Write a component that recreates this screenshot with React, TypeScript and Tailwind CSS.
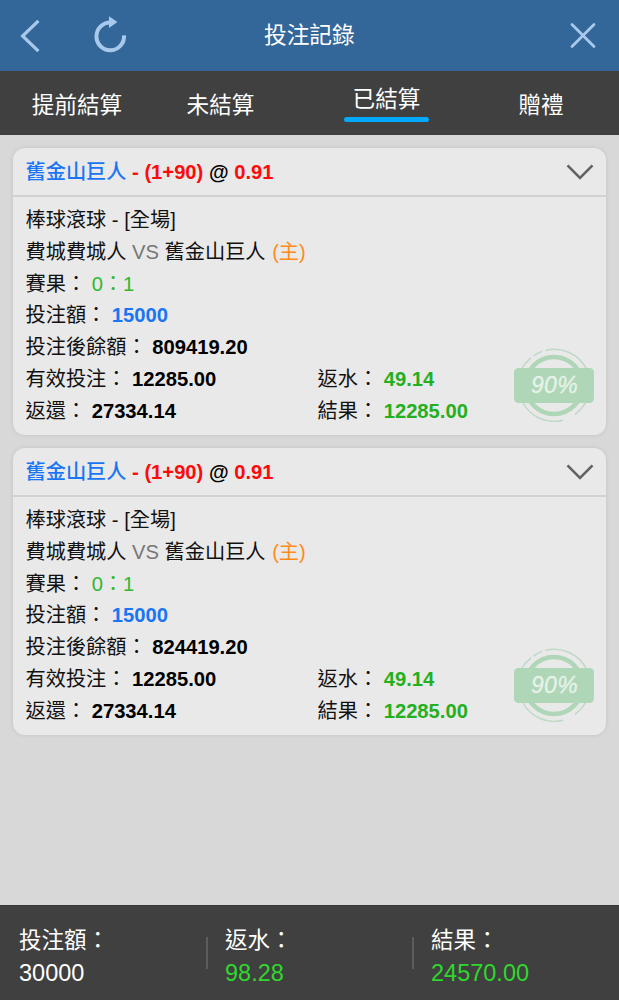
import React from 'react';

type Bet = {
  id: number;
  balance: string;
};

const bets: Bet[] = [
  { id: 1, balance: '809419.20' },
  { id: 2, balance: '824419.20' },
];

const Header: React.FC = () => (
  <header className="flex h-[71px] shrink-0 items-center bg-[#336699]">
    <div className="flex w-[264px] items-center">
      <svg className="ml-5 h-[34px] w-5" viewBox="0 0 20 34" fill="none" stroke="#a9c9ec" strokeWidth="3.2">
        <path d="M18.4 1.8 L2.6 17 L18.4 32.2" />
      </svg>
      <svg className="ml-[53px] h-9 w-9 overflow-visible" viewBox="0 0 36 36" fill="none">
        <path d="M17.4 4.6 A13.8 13.8 0 1 0 31 17.3" stroke="#a9c9ec" strokeWidth="4" />
        <path d="M16 -1.8 L24.4 4 L16 10 Z" fill="#a9c9ec" />
      </svg>
    </div>
    <h1 className="w-[92px] whitespace-nowrap pb-0.5 text-[22.7px] leading-[34px] text-white">投注記錄</h1>
    <svg className="ml-auto mr-[22px] h-7 w-7" viewBox="0 0 28 28" fill="none" stroke="#a9c9ec" strokeWidth="2.8" strokeLinecap="round">
      <path d="M3 2.5 L25 24.5 M25 2.5 L3 24.5" />
    </svg>
  </header>
);

const Tabs: React.FC = () => (
  <nav className="flex h-16 shrink-0 items-center bg-[#404040] text-center text-[22.6px] leading-[34px] text-white">
    <div className="w-[154px] pt-[5px]">提前結算</div>
    <div className="w-[133px] pt-[5px]">未結算</div>
    <div className="flex w-[199px] flex-col items-center pb-[3px]">
      <span className="pt-px leading-[34px]">已結算</span>
      <span className="h-[5px] w-[85px] rounded-full bg-[#03a9fa]" />
    </div>
    <div className="w-[110px] pt-[5px]">贈禮</div>
  </nav>
);

// Settlement stamp in the corner of each card
const Stamp: React.FC = () => (
  <svg className="absolute bottom-[13px] right-[12.5px] h-[74px] w-[80px]" viewBox="0 0 80 74" fill="none">
    <path d="M31.5 2.4 A36 36 0 0 1 73 22" stroke="#bfd9c7" strokeWidth="1.5" />
    <path d="M19.5 8.2 Q23.5 5 28 3.4" stroke="#bfd9c7" strokeWidth="1.5" />
    <path d="M7.5 21 Q11 14.5 17 9.8" stroke="#bfd9c7" strokeWidth="1.5" />
    <path d="M8.5 54 A35.5 35.5 0 0 0 49 72.2" stroke="#bfd9c7" strokeWidth="1.5" />
    <path d="M72 54 Q68 61 61 66.5" stroke="#bfd9c7" strokeWidth="1.5" />
    <circle cx="40" cy="37.5" r="28.5" stroke="#afd7b7" strokeWidth="4.6" />
    <rect x="0" y="20" width="80" height="35" rx="4.5" fill="#afd7b7" />
    <text x="40.5" y="45.2" textAnchor="middle" fontFamily="Liberation Sans" fontStyle="italic" fontSize="23" letterSpacing="0.4" stroke="#e7f2e9" strokeWidth="0.3" fill="#e7f2e9">
      90%
    </text>
  </svg>
);

const BetCard: React.FC<{ bet: Bet }> = ({ bet }) => (
  <section className="relative h-[287px] rounded-[12px] bg-[#e9e9e9] text-[20.2px] shadow-[0_0_4px_rgba(0,0,0,0.1)]">
    <div className="flex h-[49px] items-center justify-between border-b-2 border-[#d2d2d2] pl-[12.5px] pr-[12px]">
      <div className="whitespace-pre pt-px font-bold text-[#ff0a0a]">
        <span className="font-medium text-[#1a75f5]">舊金山巨人</span> - (1+90) <span className="text-black">@</span> 0.91
      </div>
      <svg className="h-[18px] w-7" viewBox="0 0 28 18" fill="none" stroke="#626262" strokeWidth="2.6">
        <path d="M1.5 2.3 L14 15 L26.5 2.3" />
      </svg>
    </div>
    <div className="px-[12.5px] pt-2 leading-[31.8px] text-[#111]">
      <p>棒球滾球 - [全場]</p>
      <p>
        費城費城人 <span className="text-[#777]">VS</span> 舊金山巨人 <span className="ml-px text-[#ff8c1a]">(主)</span>
      </p>
      <p>
        賽果： <span className="text-[#2fb82f]">0：1</span>
      </p>
      <p>
        投注額： <b className="text-[#1a75f5]">15000</b>
      </p>
      <p>
        投注後餘額： <b className="text-black">{bet.balance}</b>
      </p>
      <div className="grid grid-cols-[292px_1fr]">
        <p>
          有效投注： <b className="text-black">12285.00</b>
        </p>
        <p>
          返水： <b className="text-[#24b01e]">49.14</b>
        </p>
        <p>
          返還： <b className="text-black">27334.14</b>
        </p>
        <p>
          結果： <b className="text-[#24b01e]">12285.00</b>
        </p>
      </div>
    </div>
    <Stamp />
  </section>
);

const Summary: React.FC = () => (
  <footer className="flex h-[95px] shrink-0 items-center border-t border-[#353535] bg-[#404040] leading-8 text-white">
    <div className="w-[206px] pl-[19px] pt-[7px]">
      <p className="text-[22.5px]">投注額：</p>
      <p className="text-[23.5px]">30000</p>
    </div>
    <div className="mb-px h-8 w-0.5 bg-[#5d5d5d]" />
    <div className="w-[204px] pl-[17px] pt-[7px]">
      <p className="text-[22.5px]">返水：</p>
      <p className="text-[23.5px] text-[#2fd82c]">98.28</p>
    </div>
    <div className="mb-px h-8 w-0.5 bg-[#5d5d5d]" />
    <div className="pl-[17px] pt-[7px]">
      <p className="text-[22.5px]">結果：</p>
      <p className="text-[23.5px] text-[#2fd82c]">24570.00</p>
    </div>
  </footer>
);

export default function App() {
  return (
    <div className="flex h-screen flex-col overflow-hidden bg-[#d8d8d8] font-['Liberation_Sans','Noto_Sans_CJK_TC',sans-serif]">
      <Header />
      <Tabs />
      <main className="flex flex-1 flex-col gap-[13px] px-[13px] pt-[13px]">
        {bets.map((bet) => (
          <BetCard key={bet.id} bet={bet} />
        ))}
      </main>
      <Summary />
    </div>
  );
}
